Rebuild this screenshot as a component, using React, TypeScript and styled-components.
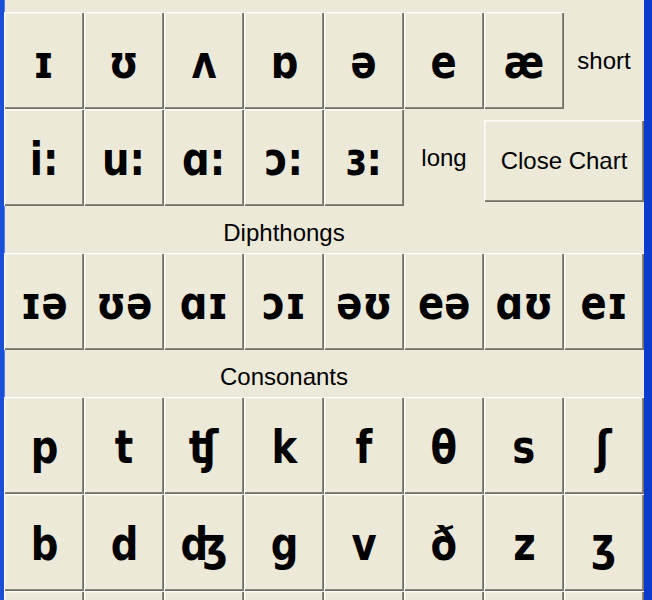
import styled, { createGlobalStyle } from 'styled-components';

const GlobalStyle = createGlobalStyle`
  html, body {
    margin: 0;
    padding: 0;
    overflow: hidden;
    background: #ece9d8;
  }
`;

const Window = styled.div`
  width: 652px;
  height: 600px;
  box-sizing: border-box;
  border-left: 4px solid #1c4fd8;
  border-right: 8px solid #0b3bcc;
  box-shadow: inset 1px 0 0 #4d7ef0;
  background: #ece9d8;
  overflow: hidden;
  font-family: "Liberation Sans", Arial, sans-serif;
  color: #000;
`;

// the chart is scrolled a little, so the first heading sits above the top edge
const Chart = styled.div`
  margin-top: -35px;
  display: flex;
  flex-direction: column;
`;

const SectionLabel = styled.div`
  width: 560px;
  height: 47px;
  box-sizing: border-box;
  padding-top: 6px;
  display: flex;
  align-items: center;
  justify-content: center;
  font-size: 24px;
`;

const KeyGrid = styled.div`
  display: grid;
  grid-template-columns: repeat(8, 80px);
  grid-auto-rows: 97px;
`;

const Key = styled.button`
  margin: 0;
  padding: 3px 0 0;
  border: none;
  background: #ece9d8;
  box-shadow: inset 1px 1px 0 #fdfdfb, inset -1px -1px 0 #716f64, inset -2px -2px 0 #8d8a7e,
    inset 2px 2px 0 #f3f1e8;
  display: flex;
  align-items: center;
  justify-content: center;
  font-family: "DejaVu Sans", sans-serif;
  font-weight: bold;
  font-size: 46px;
  color: #000;
  cursor: pointer;
`;

const Glyph = styled.span`
  display: inline-block;
  transform: scaleX(0.84);
  white-space: nowrap;
`;

const Note = styled.div`
  display: flex;
  align-items: center;
  justify-content: center;
  font-size: 24px;
`;

const CloseButton = styled.button`
  grid-column: span 2;
  align-self: start;
  height: 82px;
  margin: 11px 0 0;
  padding: 0;
  border: none;
  background: #ece9d8;
  box-shadow: inset 1px 1px 0 #fdfdfb, inset -1px -1px 0 #716f64, inset -2px -2px 0 #8d8a7e,
    inset 2px 2px 0 #f3f1e8;
  font-family: "Liberation Sans", Arial, sans-serif;
  font-size: 24px;
  color: #000;
  cursor: pointer;
`;

const shortVowels = ['ɪ', 'ʊ', 'ʌ', 'ɒ', 'ə', 'e', 'æ'];
const longVowels = ['i:', 'u:', 'ɑ:', 'ɔ:', 'ɜ:'];
const diphthongs = ['ɪə', 'ʊə', 'ɑɪ', 'ɔɪ', 'əʊ', 'eə', 'ɑʊ', 'eɪ'];
const consonants = [
  'p', 't', 'ʧ', 'k', 'f', 'θ', 's', 'ʃ',
  'b', 'd', 'ʤ', 'g', 'v', 'ð', 'z', 'ʒ',
  'm', 'n', 'ŋ', 'h', 'l', 'r', 'w', 'j',
];

const SymbolKey = ({ symbol }: { symbol: string }) => (
  <Key type="button">
    <Glyph>{symbol}</Glyph>
  </Key>
);

const App = () => (
  <Window>
    <GlobalStyle />
    <Chart>
      <SectionLabel>Vowels</SectionLabel>
      <KeyGrid>
        {shortVowels.map((s) => <SymbolKey key={s} symbol={s} />)}
        <Note>short</Note>
        {longVowels.map((s) => <SymbolKey key={s} symbol={s} />)}
        <Note>long</Note>
        <CloseButton type="button">Close Chart</CloseButton>
      </KeyGrid>
      <SectionLabel>Diphthongs</SectionLabel>
      <KeyGrid>
        {diphthongs.map((s) => <SymbolKey key={s} symbol={s} />)}
      </KeyGrid>
      <SectionLabel>Consonants</SectionLabel>
      <KeyGrid>
        {consonants.map((s) => <SymbolKey key={s} symbol={s} />)}
      </KeyGrid>
    </Chart>
  </Window>
);

export default App;
